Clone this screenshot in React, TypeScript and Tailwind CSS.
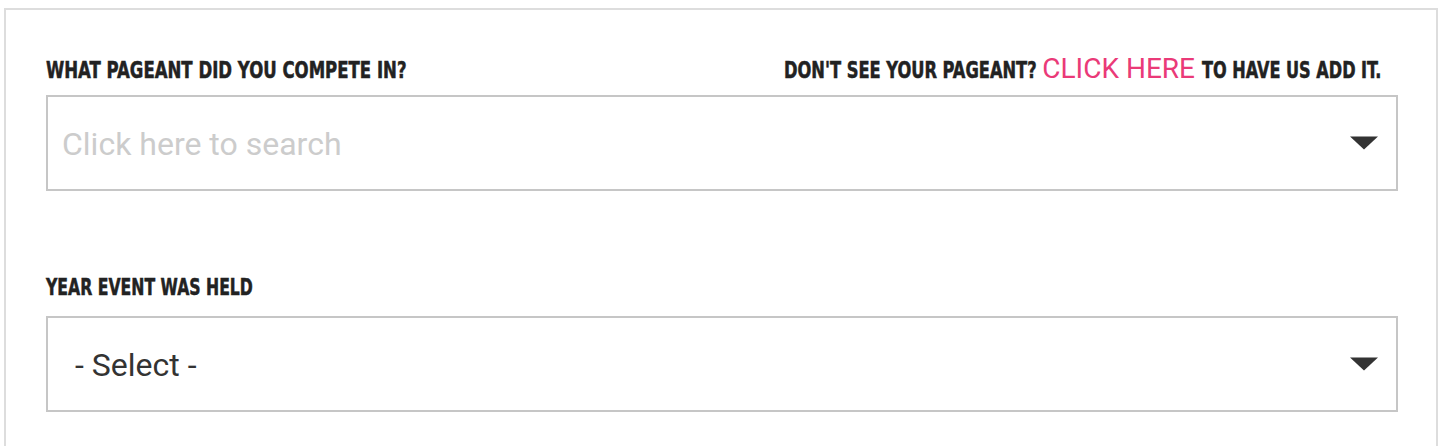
import React from "react";

function Squeeze({ w, s, children }: { w: string; s: string; children: React.ReactNode }) {
  return (
    <span className={`inline-block whitespace-nowrap ${w}`}>
      <span
        className={`inline-block whitespace-nowrap origin-left font-['DejaVu_Sans_Condensed','DejaVu_Sans',sans-serif] font-bold text-[23px] leading-none text-[#222222] [-webkit-text-stroke:0.5px_#222222] ${s}`}
      >
        {children}
      </span>
    </span>
  );
}

function Caret() {
  return (
    <svg width="28" height="14" viewBox="0 0 28 14" className="shrink-0">
      <path d="M0 0.5 L28 0.5 L14 13.5 Z" fill="#333333" />
    </svg>
  );
}

export default function App() {
  return (
    <div className="w-[1442px] h-[446px] overflow-hidden bg-white pt-[8px] px-[4px]">
      <div className="h-[460px] border-2 border-[#dddddd] pl-[40px] pr-[38px] pt-[45px]">
        <div className="flex items-baseline justify-between pr-[17px]">
          <Squeeze w="w-[359px]" s="scale-x-[0.80]">WHAT PAGEANT DID YOU COMPETE IN?</Squeeze>
          <div className="flex items-baseline">
            <Squeeze w="w-[250px]" s="scale-x-[0.786]">DON'T SEE YOUR PAGEANT?</Squeeze>
            <span className="ml-[8px] mr-[7px] font-['Roboto',sans-serif] font-normal text-[28px] leading-none text-[#ea3a78]">
              CLICK HERE
            </span>
            <Squeeze w="w-[179px]" s="scale-x-[0.778]">TO HAVE US ADD IT.</Squeeze>
          </div>
        </div>
        <div className="mt-[11px] h-[96px] border-2 border-[#c6c6c6] flex items-center pl-[14px] pr-[18px]">
          <span className="flex-1 pt-[2px] font-['Roboto',sans-serif] text-[32px] leading-none text-[#cccccc]">
            Click here to search
          </span>
          <Caret />
        </div>
        <div className="mt-[85px] flex items-baseline">
          <Squeeze w="w-[207px]" s="scale-x-[0.758]">YEAR EVENT WAS HELD</Squeeze>
        </div>
        <div className="mt-[15px] h-[96px] border-2 border-[#c6c6c6] flex items-center pl-[27px] pr-[18px]">
          <span className="flex-1 pt-[2px] font-['Roboto',sans-serif] text-[32px] leading-none text-[#333333]">
            - Select -
          </span>
          <Caret />
        </div>
      </div>
    </div>
  );
}
